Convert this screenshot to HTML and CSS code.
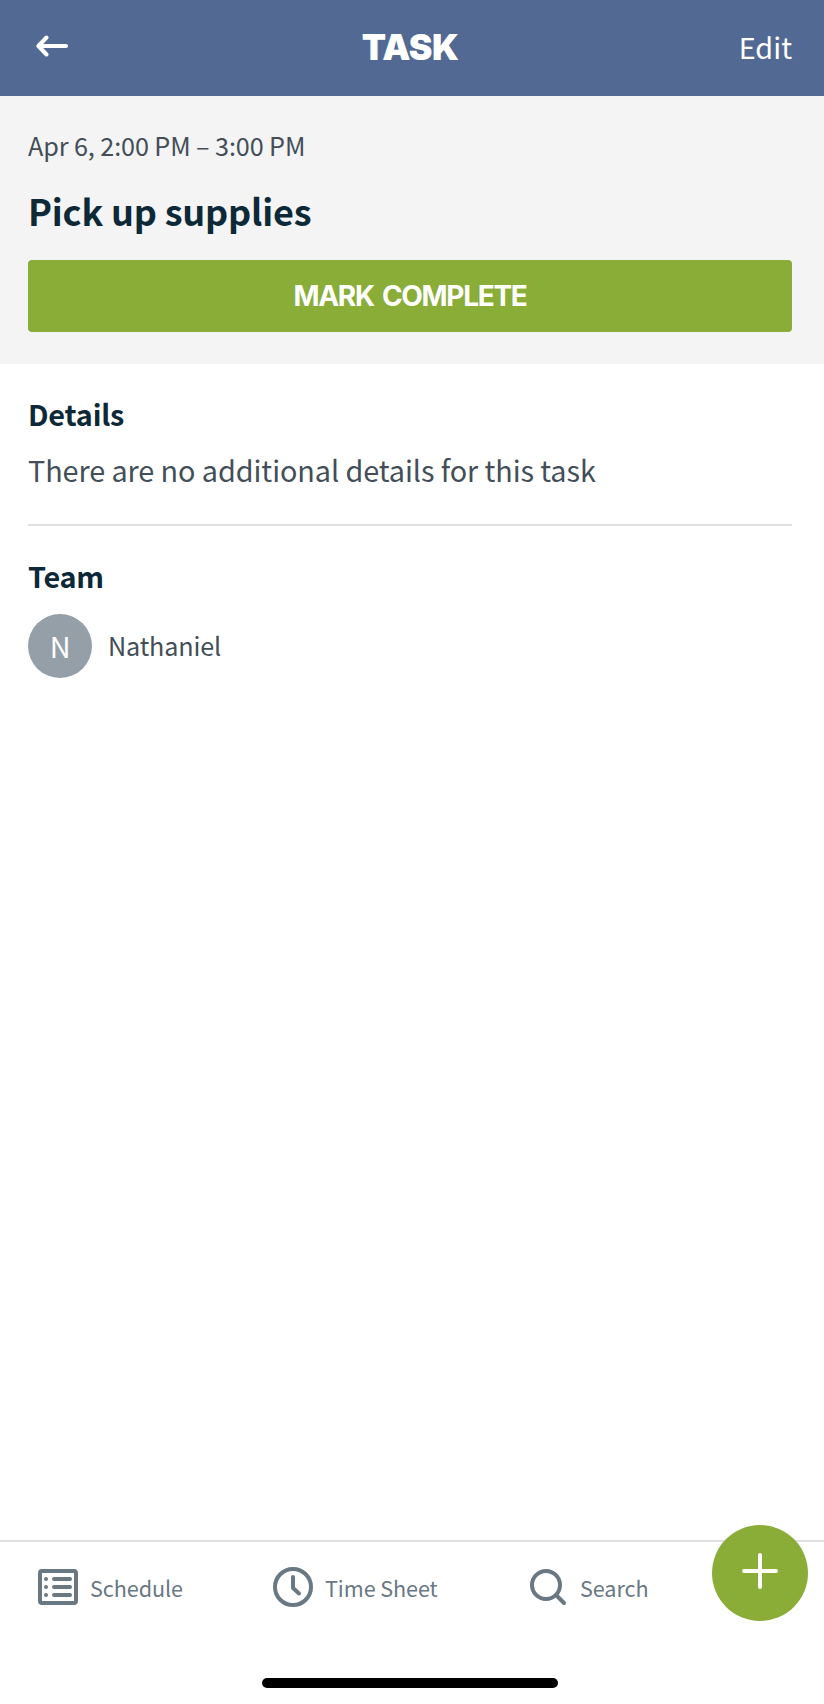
FILE: index.html
```html
<!DOCTYPE html>
<html lang="en">
<head>
  <meta charset="UTF-8">
  <meta name="viewport" content="width=device-width, initial-scale=1.0">
  <title>Task</title>
  <link rel="stylesheet" href="styles.css">
</head>
<body>
  <header class="top-bar">
    <button class="back" aria-label="Back">
      <svg width="32" height="22" viewBox="0 0 32 22">
        <path d="M10.5 2.5 L2.4 11 L10.5 19.5 M3 11 H30" />
      </svg>
    </button>
    <h1 class="page-title">TASK</h1>
    <button class="edit">Edit</button>
  </header>

  <section class="summary">
    <p class="time">Apr 6, 2:00 PM – 3:00 PM</p>
    <h2 class="task-name">Pick up supplies</h2>
    <button class="complete">MARK COMPLETE</button>
  </section>

  <main class="content">
    <section class="details">
      <h3>Details</h3>
      <p class="details-text">There are no additional details for this task</p>
    </section>
    <section class="team">
      <h3>Team</h3>
      <div class="member">
        <span class="avatar">N</span>
        <span class="member-name">Nathaniel</span>
      </div>
    </section>
  </main>

  <footer class="bottom-bar">
    <nav class="tabs">
      <a class="tab tab-schedule">
        <svg width="40" height="40" viewBox="0 0 40 40">
          <rect x="2" y="4" width="36" height="32" rx="2" />
          <path d="M16 12 H32 M16 20 H32 M16 28 H32" />
          <path d="M8 12 H8.01 M8 20 H8.01 M8 28 H8.01" />
        </svg>
        <span class="tab-label">Schedule</span>
      </a>
      <a class="tab tab-time">
        <svg width="40" height="40" viewBox="0 0 40 40">
          <circle cx="20" cy="20" r="18" />
          <path d="M20 10 V21 L26 26.5" />
        </svg>
        <span class="tab-label">Time Sheet</span>
      </a>
      <a class="tab tab-search">
        <svg width="40" height="40" viewBox="0 0 40 40">
          <circle cx="18" cy="18" r="14" />
          <path d="M28.5 28.5 L36 36" />
        </svg>
        <span class="tab-label">Search</span>
      </a>
    </nav>
    <button class="add" aria-label="Add">
      <svg width="36" height="36" viewBox="0 0 36 36">
        <path d="M18 2 V34 M2 18 H34" />
      </svg>
    </button>
    <div class="home-indicator"></div>
  </footer>
</body>
</html>
```
FILE: styles.css
```css
* { box-sizing: border-box; margin: 0; padding: 0; }
body {
  display: flex;
  flex-direction: column;
  min-height: 100vh;
  background: #fff;
  color: #434e58;
  font-family: 'Noto Sans CJK SC', 'Noto Sans', sans-serif;
  font-size: 28.8px;
  line-height: 40px;
  letter-spacing: -0.08px;
}
button {
  border: none;
  background: none;
  color: #fff;
  font: inherit;
  cursor: pointer;
}
svg {
  display: block;
  flex-shrink: 0;
  fill: none;
  stroke: currentColor;
  stroke-width: 4;
  stroke-linecap: round;
  stroke-linejoin: round;
}

/* Header */
.top-bar {
  display: grid;
  grid-template-columns: 1fr auto 1fr;
  align-items: center;
  height: 96px;
  padding: 0 32px 3px 28px;
  background: #526993;
}
.back {
  justify-self: start;
  padding: 0 8px 2px;
}
.edit { justify-self: end; }
.page-title {
  padding-top: 3px;
  color: #fff;
  font-family: Inter, sans-serif;
  font-size: 35.5px;
  font-weight: 900;
  letter-spacing: -0.6px;
}

/* Task summary */
.summary {
  height: 268px;
  padding: 32px 32px 32px 28px;
  background: #f4f4f4;
}
.time {
  font-size: 25.2px;
  line-height: 34px;
  letter-spacing: -0.1px;
}
.task-name {
  margin: 24px 0 26px;
  color: #0d2938;
  font-size: 36px;
  line-height: 48px;
  letter-spacing: -0.18px;
}
.complete {
  display: block;
  width: 100%;
  height: 72px;
  border-radius: 4px;
  background: #89ad37;
  font-family: Inter, sans-serif;
  font-size: 28px;
  font-weight: 700;
  letter-spacing: -1.3px;
  word-spacing: 2.8px;
}

/* Details and team */
.content {
  flex: 1;
  padding: 30px 32px 0 28px;
}
h3 {
  color: #0d2938;
  font-size: 28.8px;
  letter-spacing: -0.2px;
}
.details {
  padding-bottom: 34px;
  border-bottom: 2px solid #e0e0e0;
}
.details-text { margin-top: 16px; }
.team { padding-top: 30px; }
.member {
  display: flex;
  align-items: center;
  gap: 16px;
  margin-top: 18px;
}
.avatar {
  width: 64px;
  height: 64px;
  border-radius: 50%;
  background: #959fa8;
  color: #fff;
  line-height: 63px;
  text-align: center;
}
.member-name {
  padding-bottom: 2px;
  font-size: 25.2px;
  letter-spacing: -0.15px;
}

/* Bottom bar */
.bottom-bar {
  position: relative;
  height: 164px;
  border-top: 2px solid #e0e0e0;
  color: #697883;
}
.tabs {
  display: flex;
  height: 65px;
  padding: 25px 0 0 38px;
}
.tab {
  display: flex;
  align-items: center;
  gap: 12px;
  font-size: 21.6px;
}
.tab-label { padding-top: 2px; }
.tab-schedule { width: 235px; }
.tab-time { width: 255px; }
.add {
  position: absolute;
  top: -17px;
  right: 16px;
  width: 96px;
  height: 96px;
  padding: 0 0 4px 30px;
  border-radius: 50%;
  background: #89ad37;
}
.home-indicator {
  width: 296px;
  height: 10px;
  margin: 71px 0 0 262px;
  border-radius: 5px;
  background: #000;
}
```
